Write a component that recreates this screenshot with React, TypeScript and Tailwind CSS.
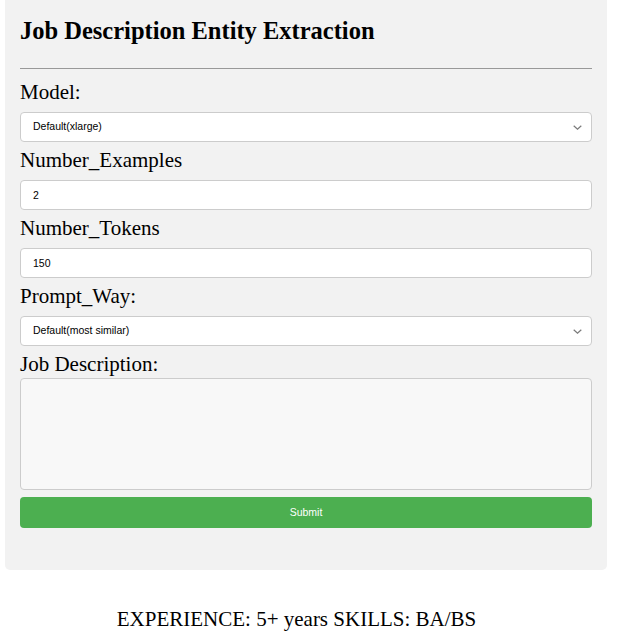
import React from "react";

const serif = { fontFamily: '"Liberation Serif", "Times New Roman", serif' };

function Label({ children, className = "" }: { children: React.ReactNode; className?: string }) {
  return (
    <label className={`block h-[30px] pt-[7px] text-[21px] leading-[23px] text-black ${className}`} style={serif}>
      {children}
    </label>
  );
}

const field =
  "block h-[30px] w-full rounded-[4px] border border-[#cccccc] bg-white text-[10.5px] text-black font-['Liberation_Sans',Arial,sans-serif]";

function Select({ value, label }: { value: string; label: string }) {
  return (
    <div className="relative mt-[8px]">
      <select className={`${field} appearance-none pl-[12px] pr-[24px]`} defaultValue={value}>
        <option value={value}>{label}</option>
      </select>
      <svg
        className="pointer-events-none absolute right-[10px] top-[13px]"
        width="9"
        height="5"
        viewBox="0 0 9 5"
        fill="none"
      >
        <path d="M0.7 0.7 L4.5 4.2 L8.3 0.7" stroke="#7a7a7a" strokeWidth="1.2" />
      </svg>
    </div>
  );
}

export default function App() {
  return (
    <div className="min-h-[641px] bg-white">
      <div className="ml-[5px] mr-[20px] rounded-b-[5px] bg-[#f2f2f2] px-[15px] pb-[42px] pt-[16px]">
        <h2 className="text-[24.5px] font-bold leading-[30px] text-black" style={serif}>
          Job Description Entity Extraction
        </h2>
        <hr className="mt-[22px] border-t border-[#999999]" />

        <Label className="mt-[5px]">Model:</Label>
        <Select value="xlarge" label="Default(xlarge)" />

        <Label>Number_Examples</Label>
        <input className={`${field} mt-[8px] px-[12px]`} defaultValue="2" />

        <Label>Number_Tokens</Label>
        <input className={`${field} mt-[8px] px-[12px]`} defaultValue="150" />

        <Label>Prompt_Way:</Label>
        <Select value="similar" label="Default(most similar)" />

        <Label>Job Description:</Label>
        <textarea className="mt-[2px] block h-[112px] w-full resize-none rounded-[4px] border border-[#cccccc] bg-[#f8f8f8]" />

        <button className="mt-[7px] block h-[31px] w-full rounded-[4px] bg-[#4caf50] text-[10.5px] text-white font-['Liberation_Sans',Arial,sans-serif]">
          Submit
        </button>
      </div>

      <p className="mt-[34px] pr-[34px] text-center text-[21px] leading-[30px] text-black" style={serif}>
        EXPERIENCE: 5+ years SKILLS: BA/BS
      </p>
    </div>
  );
}
